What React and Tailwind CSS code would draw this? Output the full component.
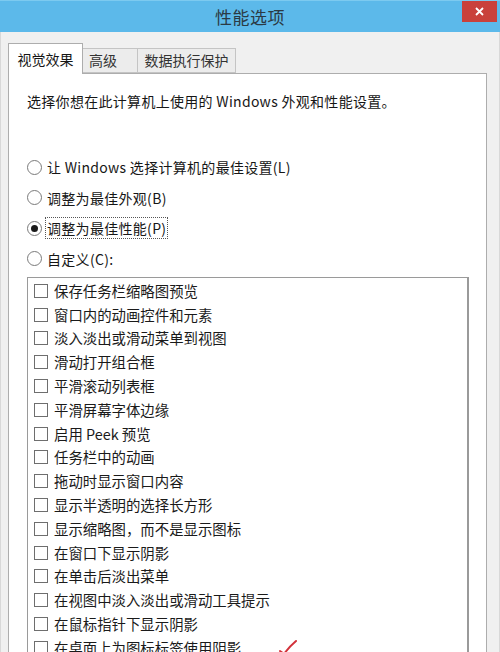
const options = [
  { label: '让 Windows 选择计算机的最佳设置(L)', checked: false },
  { label: '调整为最佳外观(B)', checked: false },
  { label: '调整为最佳性能(P)', checked: true },
  { label: '自定义(C):', checked: false },
];

const effects = [
  '保存任务栏缩略图预览',
  '窗口内的动画控件和元素',
  '淡入淡出或滑动菜单到视图',
  '滑动打开组合框',
  '平滑滚动列表框',
  '平滑屏幕字体边缘',
  '启用 Peek 预览',
  '任务栏中的动画',
  '拖动时显示窗口内容',
  '显示半透明的选择长方形',
  '显示缩略图，而不是显示图标',
  '在窗口下显示阴影',
  '在单击后淡出菜单',
  '在视图中淡入淡出或滑动工具提示',
  '在鼠标指针下显示阴影',
  '在桌面上为图标标签使用阴影',
];

function Radio({ checked }) {
  return (
    <span className="flex items-center justify-center w-[15px] h-[15px] rounded-full border border-[#7a7a7a] bg-white shrink-0">
      {checked && <span className="w-[7px] h-[7px] rounded-full bg-[#1a1a1a]" />}
    </span>
  );
}

export default function App() {
  return (
    <div
      className="w-[500px] h-[652px] overflow-hidden bg-[#f0f0f0] flex flex-col text-[#161616]"
      style={{ fontFamily: '"Noto Sans CJK SC", "Noto Sans", sans-serif' }}
    >
      {/* Title bar */}
      <div className="relative h-[32px] shrink-0 bg-[#5cb9ea] border-t border-[#7ccaf0] flex items-center justify-center">
        <span className="text-[17px] text-[#2b3a44] tracking-[0.5px]">性能选项</span>
        <div className="absolute right-[3px] top-0 w-[35px] h-[21px] bg-[#c9413b] flex items-center justify-center">
          <svg width="9" height="9" viewBox="0 0 9 9">
            <path d="M1 1 L8 8 M8 1 L1 8" stroke="#fff" strokeWidth="1.8" />
          </svg>
        </div>
      </div>

      {/* Body */}
      <div className="flex-1 flex flex-col pl-[7px] pr-[12px] pt-[11px] border-l border-r border-[#d8d8d8]">
        {/* Tabs */}
        <div className="flex items-end h-[30px] shrink-0 relative z-10">
          <div className="h-[31px] w-[75px] bg-white border border-b-0 border-[#adadad] flex items-center justify-center text-[14px] -mb-[1px]">
            视觉效果
          </div>
          <div className="h-[25px] w-[55px] bg-[#ececec] border border-l-0 border-[#c4c4c4] flex items-center pl-[6px] text-[14px] text-[#333]">
            高级
          </div>
          <div className="h-[25px] w-[98px] bg-[#ececec] border border-l-0 border-[#c4c4c4] flex items-center justify-center text-[14px] text-[#333]">
            数据执行保护
          </div>
        </div>

        {/* Panel */}
        <div className="flex-1 bg-white border border-[#adadad] pl-[18px] pr-[17px] pt-[18px] flex flex-col">
          <p className="text-[14px] leading-[18px] tracking-[0.3px]">
            选择你想在此计算机上使用的 Windows 外观和性能设置。
          </p>

          <div className="mt-[42px] flex flex-col">
            {options.map((o) => (
              <div key={o.label} className="h-[30.5px] flex items-center gap-[3px]">
                <Radio checked={o.checked} />
                <span
                  className={`text-[14px] leading-[20px] px-[1px] tracking-[0.3px] ${
                    o.checked ? 'border border-dotted border-[#555]' : 'border border-transparent'
                  }`}
                >
                  {o.label}
                </span>
              </div>
            ))}
          </div>

          {/* Effects list */}
          <div className="relative mt-[3px] flex-1 border border-[#9a9a9a] border-r-[2px] pt-[1px] pl-[6px] overflow-hidden">
            {effects.map((e) => (
              <div key={e} className="h-[23.8px] flex items-center gap-[6px]">
                <span className="w-[14px] h-[14px] border border-[#6e6e6e] bg-white shrink-0" />
                <span className="text-[14.4px] leading-[18px] text-[#1a1a1a] whitespace-nowrap">{e}</span>
              </div>
            ))}
            <svg
              className="absolute left-[250px] top-[361px]"
              width="20"
              height="16"
              viewBox="0 0 20 16"
            >
              <path d="M2 12 Q5 14 6 15 Q11 8 18 2" stroke="#d2313a" strokeWidth="2" fill="none" strokeLinecap="round" />
            </svg>
          </div>
        </div>
      </div>
    </div>
  );
}
